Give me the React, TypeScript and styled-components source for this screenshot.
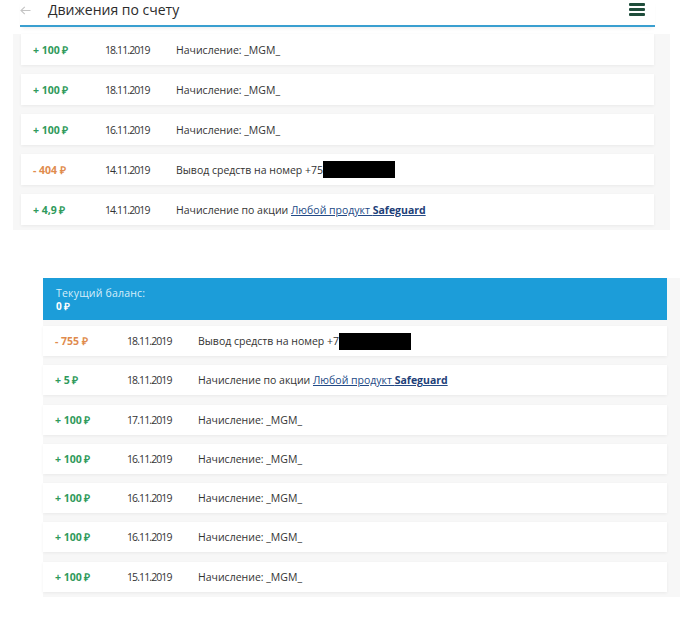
import React from "react";
import styled, { createGlobalStyle } from "styled-components";

interface Operation {
  amount: string;
  kind: "in" | "out";
  date: string;
  text: string;
  masked?: boolean;
  promo?: boolean;
}

const topList: Operation[] = [
  { amount: "+ 100 ₽", kind: "in", date: "18.11.2019", text: "Начисление: _MGM_" },
  { amount: "+ 100 ₽", kind: "in", date: "18.11.2019", text: "Начисление: _MGM_" },
  { amount: "+ 100 ₽", kind: "in", date: "16.11.2019", text: "Начисление: _MGM_" },
  { amount: "- 404 ₽", kind: "out", date: "14.11.2019", text: "Вывод средств на номер +75", masked: true },
  { amount: "+ 4,9 ₽", kind: "in", date: "14.11.2019", text: "Начисление по акции", promo: true },
];

const bottomList: Operation[] = [
  { amount: "- 755 ₽", kind: "out", date: "18.11.2019", text: "Вывод средств на номер +7", masked: true },
  { amount: "+ 5 ₽", kind: "in", date: "18.11.2019", text: "Начисление по акции", promo: true },
  { amount: "+ 100 ₽", kind: "in", date: "17.11.2019", text: "Начисление: _MGM_" },
  { amount: "+ 100 ₽", kind: "in", date: "16.11.2019", text: "Начисление: _MGM_" },
  { amount: "+ 100 ₽", kind: "in", date: "16.11.2019", text: "Начисление: _MGM_" },
  { amount: "+ 100 ₽", kind: "in", date: "16.11.2019", text: "Начисление: _MGM_" },
  { amount: "+ 100 ₽", kind: "in", date: "15.11.2019", text: "Начисление: _MGM_" },
];

function OperationRow({ op, height }: { op: Operation; height: number }) {
  return (
    <StyledRow $height={height}>
      <StyledAmount $kind={op.kind}>{op.amount}</StyledAmount>
      <StyledDate>{op.date}</StyledDate>
      <StyledText>
        {op.text}
        {op.masked && <StyledMask />}
        {op.promo && (
          <>
            {" "}
            <StyledLink>
              Любой продукт <b>Safeguard</b>
            </StyledLink>
          </>
        )}
      </StyledText>
    </StyledRow>
  );
}

export default function App() {
  return (
    <>
      <GlobalStyle />
      <StyledHeaderWrap>
        <StyledHeader>
          <StyledBack>
            <svg width="11" height="9" viewBox="0 0 11 9" fill="none" stroke="#c4c4c4" strokeWidth="1.1">
              <path d="M10.5 4.5H1M4.8 0.8L1 4.5l3.8 3.7" />
            </svg>
          </StyledBack>
          <StyledHeading>Движения по счету</StyledHeading>
          <StyledBurger>
            <span />
            <span />
            <span />
          </StyledBurger>
        </StyledHeader>
      </StyledHeaderWrap>

      <StyledTopPanel>
        {topList.map((op, idx) => (
          <OperationRow key={idx} op={op} height={31} />
        ))}
      </StyledTopPanel>

      <StyledBottomPanel>
        <StyledBalance>
          <StyledBalanceLabel>Текущий баланс:</StyledBalanceLabel>
          <StyledBalanceValue>0 ₽</StyledBalanceValue>
        </StyledBalance>
        <StyledRows>
          {bottomList.map((op, idx) => (
            <OperationRow key={idx} op={op} height={30} />
          ))}
        </StyledRows>
      </StyledBottomPanel>
    </>
  );
}

// style
const GlobalStyle = createGlobalStyle`
  body {
    margin: 0;
    background: #fff;
    font-family: "Open Sans", "Liberation Sans", sans-serif;
    color: #333;
  }
`;

const StyledHeaderWrap = styled.div`
  padding: 0 26px 0 20px;
`;

const StyledHeader = styled.header`
  display: flex;
  align-items: center;
  height: 25px;
  border-bottom: 2px solid #3a9fd0;
  box-shadow: 0 3px 4px -2px rgba(0, 0, 0, 0.08);
`;

const StyledBack = styled.div`
  display: flex;
  width: 28px;
  min-width: 28px;
  margin-top: -4px;
`;

const StyledHeading = styled.h1`
  flex: 1 1 auto;
  margin: -6px 0 0 0;
  font-size: 14px;
  font-weight: 400;
  color: #2b2b2b;
`;

const StyledBurger = styled.div`
  display: flex;
  flex-direction: column;
  gap: 2px;
  width: 16px;
  min-width: 16px;
  margin-right: 10px;
  margin-top: -7px;

  span {
    height: 3px;
    border-radius: 1px;
    background: #1f4d3b;
  }
`;

const StyledTopPanel = styled.section`
  display: flex;
  flex-direction: column;
  gap: 9px;
  width: 633px;
  margin: 7px 0 0 13px;
  padding: 0 16px 5px 8px;
  background: #f7f7f7;
`;

const StyledBottomPanel = styled.section`
  width: 624px;
  margin: 48px 0 0 43px;
  padding: 0 13px 5px 0;
  background: #f7f7f7;
`;

const StyledBalance = styled.div`
  display: flex;
  flex-direction: column;
  justify-content: center;
  height: 42px;
  padding-left: 13px;
  background: #1c9dd9;
  color: #fff;
`;

const StyledBalanceLabel = styled.span`
  font-size: 10.5px;
  line-height: 13px;
  letter-spacing: 0.2px;
  color: #d6eefa;
`;

const StyledBalanceValue = styled.span`
  font-size: 10px;
  line-height: 12px;
  font-weight: 700;
`;

const StyledRows = styled.div`
  display: flex;
  flex-direction: column;
  gap: 9.3px;
  padding-top: 6px;
`;

const StyledRow = styled.div<{ $height: number }>`
  display: flex;
  align-items: center;
  height: ${({ $height }) => $height}px;
  padding-left: 12px;
  background: #fff;
  box-shadow: 0 1px 3px rgba(0, 0, 0, 0.06);
  font-size: 10.5px;
`;

const StyledAmount = styled.span<{ $kind: "in" | "out" }>`
  width: 72px;
  font-weight: 700;
  color: ${({ $kind }) => ($kind === "in" ? "#2f9a5b" : "#e08b4d")};
`;

const StyledDate = styled.span`
  width: 71px;
  letter-spacing: -0.9px;
  color: #333;
`;

const StyledText = styled.span`
  display: flex;
  align-items: center;
  white-space: pre;
  color: #333;
`;

const StyledMask = styled.span`
  display: inline-block;
  width: 72px;
  height: 17px;
  background: #000;
`;

const StyledLink = styled.a`
  color: #234a86;
  text-decoration: underline;

  b {
    color: #1d3f78;
    font-weight: 700;
  }
`;
